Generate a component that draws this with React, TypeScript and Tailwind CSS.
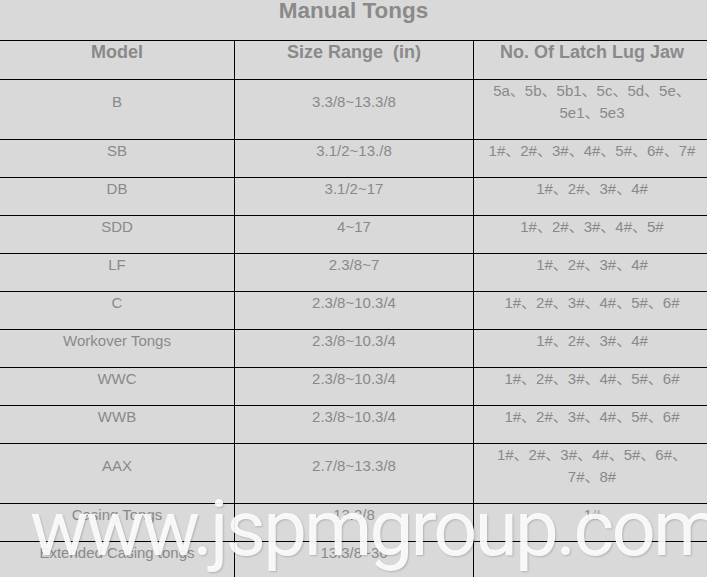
import React from 'react'

const rows: [string, string, string[]][] = [
  ['B', '3.3/8~13.3/8', ['5a、5b、5b1、5c、5d、5e、', '5e1、5e3']],
  ['SB', '3.1/2~13./8', ['1#、2#、3#、4#、5#、6#、7#']],
  ['DB', '3.1/2~17', ['1#、2#、3#、4#']],
  ['SDD', '4~17', ['1#、2#、3#、4#、5#']],
  ['LF', '2.3/8~7', ['1#、2#、3#、4#']],
  ['C', '2.3/8~10.3/4', ['1#、2#、3#、4#、5#、6#']],
  ['Workover Tongs', '2.3/8~10.3/4', ['1#、2#、3#、4#']],
  ['WWC', '2.3/8~10.3/4', ['1#、2#、3#、4#、5#、6#']],
  ['WWB', '2.3/8~10.3/4', ['1#、2#、3#、4#、5#、6#']],
  ['AAX', '2.7/8~13.3/8', ['1#、2#、3#、4#、5#、6#、', '7#、8#']],
  ['Casing Tongs', '13.3/8', ['1#']],
  ['Extended Casing tongs', '13.3/8~36', []],
]

const font = { fontFamily: '"Liberation Sans", Arial, "Noto Sans CJK SC", sans-serif' }

function Cell({ lines, head, className = '' }: { lines: string[]; head?: boolean; className?: string }) {
  return (
    <div className={`flex items-center justify-center text-center ${className}`}>
      <div className={head ? 'pb-[16px] text-[18px] font-bold leading-[22px] text-[#8a8a8a]' : 'pb-[15px] text-[15px] leading-[22px] text-[#898989]'}>
        {lines.map((l, i) => (
          <div key={i} className="whitespace-nowrap">{l}</div>
        ))}
      </div>
    </div>
  )
}

export default function App() {
  return (
    <div className="relative min-h-[577px] w-[707px] overflow-hidden bg-[#d9d9d9]" style={font}>
      <div className="h-[40px] text-center text-[22.5px] font-bold leading-none text-[#8a8a8a]">Manual Tongs</div>

      <div className="w-[710px]">
        <div className="flex border-y border-black">
          <Cell head lines={['Model']} className="w-[234px]" />
          <Cell head lines={['Size Range\u00a0 (in)']} className="w-[239px] border-l border-black" />
          <Cell head lines={['No. Of Latch Lug Jaw']} className="w-[237px] border-l border-black" />
        </div>
        {rows.map(([model, size, jaw]) => (
          <div key={model} className="flex border-b border-black">
            <Cell lines={[model]} className="w-[234px]" />
            <Cell lines={[size]} className="w-[239px] border-l border-black" />
            <Cell lines={jaw.length ? jaw : ['\u00a0']} className="w-[237px] border-l border-black" />
          </div>
        ))}
      </div>

      {/* watermark */}
      <div
        className="pointer-events-none absolute left-[30px] top-[490px] whitespace-nowrap text-[78px] font-normal leading-none tracking-[-2.9px] text-white/90"
        style={{ fontFamily: 'Roboto, sans-serif', textShadow: '1px 1px 2px rgba(0,0,0,0.18)' }}
      >
        www.jspmgroup.com
      </div>
    </div>
  )
}
